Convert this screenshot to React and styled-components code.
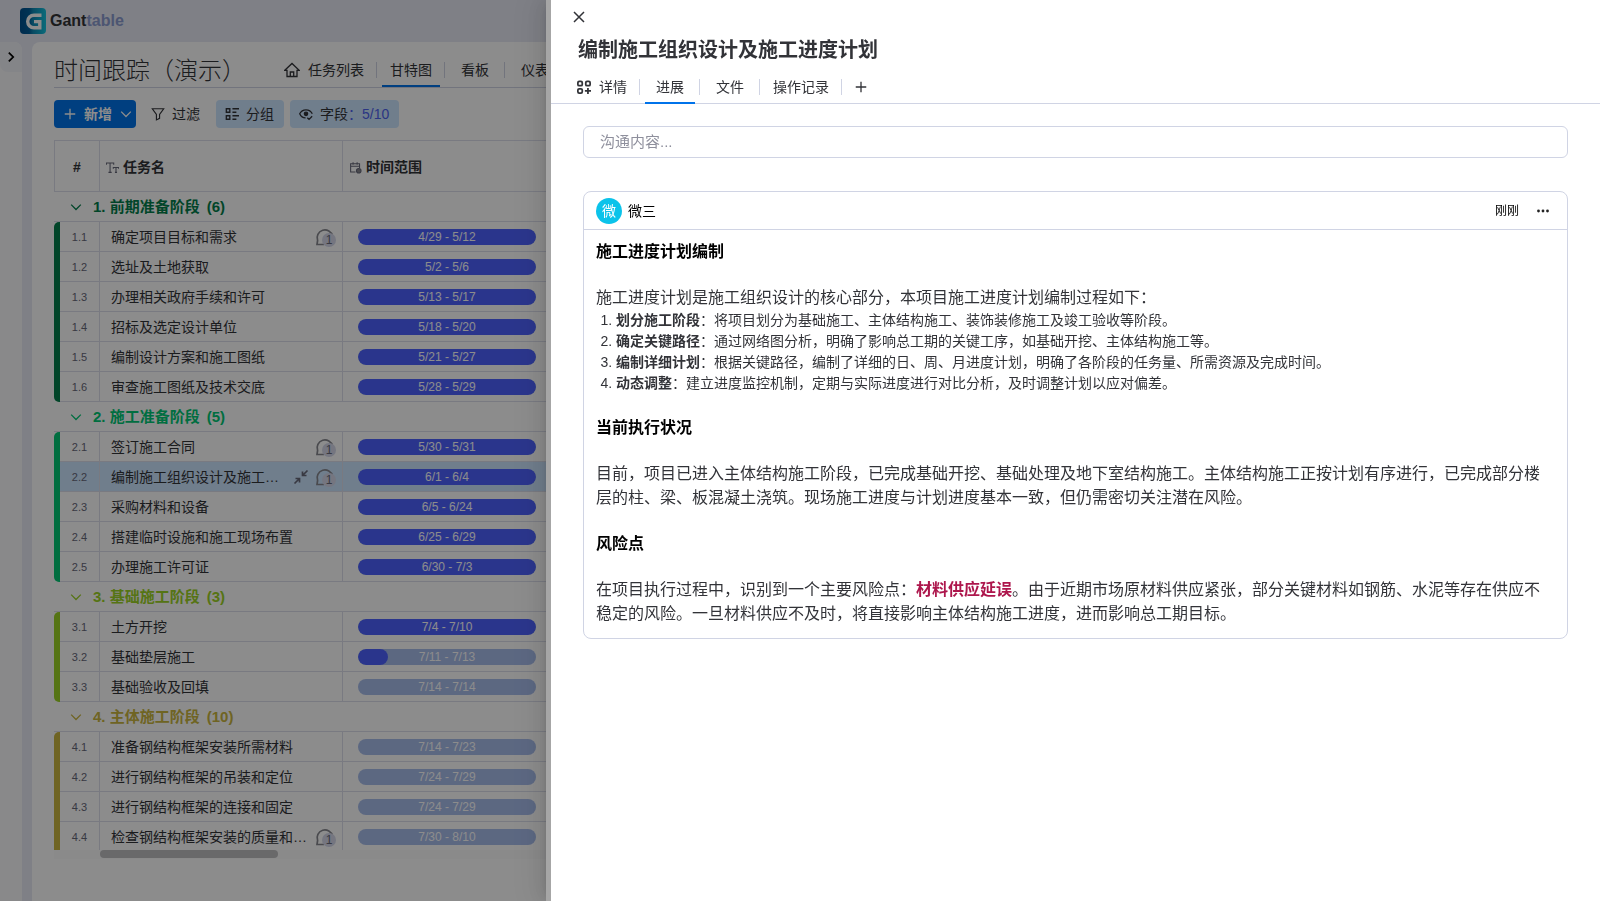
import React from "react";
import styled, { createGlobalStyle } from "styled-components";

const GlobalStyle = createGlobalStyle`
    * {
        box-sizing: border-box;
        margin: 0;
        padding: 0;
    }

    body {
        font-family: "Liberation Sans", "Noto Sans CJK SC", sans-serif;
        font-size: 14px;
        line-height: 20px;
        color: #323338;
        background: #e7e9f4;
        overflow: hidden;
    }

    button, input {
        font: inherit;
        color: inherit;
        background: none;
        border: none;
    }

    button {
        cursor: pointer;
    }

    svg {
        display: block;
        flex: none;
    }
`

/* ---------- page shell ---------- */

const Page = styled.div`
    height: 100vh;
    display: flex;
    flex-direction: column;
`

const TopBar = styled.header`
    height: 42px;
    flex: none;
    display: flex;
    align-items: center;
    gap: 4px;
    padding: 0 20px;
`

const Brand = styled.span`
    font-size: 16px;
    font-weight: bold;

    span {
        color: #8a9bcf;
    }
`

const Body = styled.div`
    flex: 1;
    min-height: 0;
    display: flex;
    gap: 10px;
`

const Sidebar = styled.aside`
    width: 22px;
    flex: none;
    background: #f9f9fb;
    border-radius: 0 8px 0 0;
`

const Expand = styled.button`
    width: 22px;
    height: 30px;
    display: flex;
    align-items: center;
    justify-content: center;
    background: #f1f2f7;
    border-radius: 0 8px 0 8px;
    color: #000;
`

const Main = styled.main`
    flex: 1;
    min-width: 0;
    display: flex;
    flex-direction: column;
    background: #fff;
    border-radius: 8px 0 0 0;
    padding: 0 0 42px 22px;
`

const TitleBar = styled.div`
    height: 46px;
    flex: none;
    display: flex;
    align-items: stretch;
    gap: 25px;
    padding-top: 11px;
    border-bottom: 1px solid #d0d4e4;
`

const Title = styled.h1`
    font-size: 24px;
    line-height: 36px;
    font-weight: 300;
    white-space: nowrap;
`

/* ---------- tabs, shared by page and drawer ---------- */

const Tabs = styled.nav`
    display: flex;
`

const TabItem = styled.div`
    display: flex;
    align-items: center;
    padding-left: 5px;

    &::after {
        content: "";
        width: 1px;
        height: 16px;
        background: #d0d4e4;
    }
`

const Tab = styled.button`
    position: relative;
    height: 100%;
    min-width: 50px;
    margin-right: 4px;
    padding: 0 8px;
    display: flex;
    align-items: center;
    justify-content: center;
    gap: 8px;
    white-space: nowrap;

    &::after {
        content: "";
        position: absolute;
        left: 0;
        right: 0;
        bottom: ${({ $overlap }) => ($overlap ? '-1px' : '0')};
        height: 2px;
        background: ${({ $active }) => ($active ? '#0073ea' : 'transparent')};
    }
`

/* ---------- toolbar ---------- */

const Toolbar = styled.div`
    flex: none;
    display: flex;
    gap: 6px;
    padding: 12px 0;
`

const ToolButton = styled.button`
    height: 28px;
    display: flex;
    align-items: center;
    gap: 7px;
    padding: 0 10px 0 9px;
    border-radius: 4px;
    background: ${({ $on }) => ($on ? '#cce5ff' : 'transparent')};
    white-space: nowrap;

    em {
        font-style: normal;
        color: #4e62ee;
    }
`

const AddButton = styled(ToolButton)`
    background: #0073ea;
    color: #fff;
    font-weight: bold;
    padding-right: 3px;
`

/* ---------- table ---------- */

const TableArea = styled.div`
    flex: 1;
    min-height: 0;
    overflow: hidden;
`

const Table = styled.table`
    width: 100%;
    table-layout: fixed;
    border-collapse: separate;
    border-spacing: 0;
`

const HeadCell = styled.th`
    height: 52px;
    border: solid #dcdfec;
    border-width: ${({ $first }) => ($first ? '1px' : '1px 1px 1px 0')};
    padding-top: 2px;
    padding-left: ${({ $first }) => ($first ? '0' : '6px')};
    text-align: ${({ $first }) => ($first ? 'center' : 'left')};
`

const HeadLabel = styled.span`
    display: flex;
    align-items: center;
    gap: 4px;

    svg {
        color: #676879;
    }
`

const GroupCell = styled.td`
    height: 30px;
    border-bottom: 1px solid #dcdfec;
    color: ${({ $color }) => $color};
`

const GroupButton = styled.button`
    display: flex;
    align-items: center;
    gap: 7px;
    padding-left: 15px;
    font-size: 15px;
    font-weight: bold;
    white-space: nowrap;

    svg {
        margin-right: 3px;
    }
`

const ColorCell = styled.td`
    background: ${({ $color }) => $color};
    border-radius: ${({ $cut }) => ($cut ? '5px 0 0 0' : '5px 0 0 5px')};
`

const Row = styled.tr`
    background: ${({ $selected }) => ($selected ? '#cce5ff' : 'transparent')};
`

const Cell = styled.td`
    height: 30px;
    border: solid #dcdfec;
    border-width: 0 1px 1px 0;
`

const NumberCell = styled(Cell)`
    font-size: 11px;
    text-align: center;
    color: #676879;
`

const NameCell = styled(Cell)`
    padding: 0 6px 0 11px;
`

const NameLine = styled.div`
    display: flex;
    align-items: center;
    gap: 6px;
    color: #676879;
`

const Name = styled.span`
    flex: 1;
    min-width: 0;
    color: #323338;
    white-space: nowrap;
`

const CommentButton = styled.button`
    position: relative;
    width: 21px;
    height: 20px;
    flex: none;
    color: #87888f;
`

const CommentCount = styled.span`
    position: absolute;
    right: 0;
    bottom: 0;
    width: 14px;
    height: 14px;
    border-radius: 7px;
    background: #d5d8ea;
    color: #676879;
    font-size: 12px;
    line-height: 14px;
    text-align: center;
`

const RangeCell = styled(Cell)`
    padding: 7px 15px 0;
    vertical-align: top;
`

const RangeBar = styled.div`
    width: 178px;
    height: 16px;
    border-radius: 8px;
    overflow: hidden;
    display: grid;
    background: #a8bdec;
    color: #fff;
    font-size: 12px;
    line-height: 16px;
    text-align: center;

    > * {
        grid-area: 1 / 1;
    }
`

const RangeDone = styled.div`
    background: #4e62ff;
    border-radius: 8px;
`

const ScrollTrack = styled.div`
    height: 9px;
    flex: none;
    padding-left: 46px;
    background: #fbfbfc;
`

const ScrollThumb = styled.div`
    width: 178px;
    height: 8px;
    border-radius: 4px;
    background: #bfbfc1;
`

/* ---------- drawer ---------- */

const Mask = styled.div`
    position: fixed;
    inset: 0;
    background: rgba(0,0,0,.45);
    display: flex;
    padding-left: 546px;
`

const Drawer = styled.section`
    flex: 1;
    min-width: 0;
    background: #fff;
    border-left: 5px solid #a6a6a6; // drag handle
    box-shadow: -6px 0 16px rgba(0,0,0,.08), -3px 0 6px -4px rgba(0,0,0,.12), -9px 0 28px 8px rgba(0,0,0,.05);
`

const DrawerHead = styled.div`
    border-bottom: 1px solid #d0d4e4;
    padding: 9px 13px 0;
`

const CloseButton = styled.button`
    display: flex;
    padding: 0 7px;
    height: 16px;
    align-items: center;
`

const DrawerTitle = styled.h2`
    font-size: 20px;
    line-height: 28px;
    padding: 11px 14px 6px;
`

const DrawerTabs = styled(Tabs)`
    height: 33px;
`

const AddTab = styled.button`
    padding: 0 12px;
`

const DrawerBody = styled.div`
    padding: 22px 32px;
`

const MessageInput = styled.input`
    display: block;
    width: 100%;
    height: 32px;
    padding: 0 16px 1px;
    border: 1px solid #d0d4e4;
    border-radius: 6px;
    font-size: 15px;

    &::placeholder {
        color: #8e8f9c;
        opacity: 1;
    }
`

const Card = styled.article`
    margin-top: 33px;
    border: 1px solid #d0d4e4;
    border-radius: 8px;
`

const CardHead = styled.div`
    height: 38px;
    display: flex;
    align-items: center;
    gap: 6px;
    padding: 0 12px;
    border-bottom: 1px solid #d0d4e4;
    color: #000;
`

const Avatar = styled.span`
    width: 26px;
    height: 26px;
    border-radius: 13px;
    background: #0bc3ea;
    color: #fff;
    line-height: 26px;
    text-align: center;
`

const Time = styled.time`
    margin-left: auto;
    font-size: 12px;
`

const MoreButton = styled.button`
    padding: 0 4px 0 10px;
`

const Post = styled.div`
    padding: 10px 12px 12px;
    font-size: 16px;
    line-height: 24px;

    h3 {
        font-size: 16px;
        color: #000;
        margin: 22px 0;
    }

    h3:first-child {
        margin-top: 0;
    }

    ol {
        font-size: 14px;
        line-height: 21px;
        padding-left: 20px;
    }

    p strong {
        color: #ad164c;
    }
`

/* ---------- icons ---------- */

const Svg = ({ size = 14, width = 1.3, children }) => (
    <svg width={size} height={size} viewBox="0 0 16 16" fill="none" stroke="currentColor" strokeWidth={width} aria-hidden="true">
        {children}
    </svg>
);

const Logo = () => (
    <svg width="26" height="26" viewBox="0 0 26 26" aria-hidden="true">
        <defs>
            <linearGradient id="logo" x1="0" y1="0" x2="1" y2="0">
                <stop offset="0" stopColor="#00508e" />
                <stop offset=".35" stopColor="#005d9a" />
                <stop offset=".5" stopColor="#1088b4" />
                <stop offset="1" stopColor="#14c4e0" />
            </linearGradient>
        </defs>
        <rect width="26" height="26" rx="4" fill="url(#logo)" />
        <path d="M21.500 7.200H14A6.300 6.300 0 0 0 7.700 13.500 6.300 6.300 0 0 0 14 19.800H19.800V13.600H14" fill="none" stroke="#fff" strokeWidth="3.400" />
    </svg>
);

const ChevronDown = () => <Svg width={1.5}><path d="M2.500 5.300 8 10.800 13.500 5.300" /></Svg>;
const Plus = () => <Svg width={1.5}><path d="M8 2v12M2 8h12" /></Svg>;

const CommentIcon = () => (
    <svg width="19" height="18" viewBox="0 0 19 18" fill="none" stroke="currentColor" strokeWidth="1.7" aria-hidden="true">
        <path d="M17.500 8A7.800 7.800 0 1 0 2.600 12.500L2 16.500H9" />
    </svg>
);

/* ---------- data ---------- */

const groups = [
    {
        title: "1. 前期准备阶段", count: 6, color: "#037f4c",
        tasks: [
            { id: "1.1", name: "确定项目目标和需求", range: "4/29 - 5/12", done: 100, comments: 1 },
            { id: "1.2", name: "选址及土地获取", range: "5/2 - 5/6", done: 100 },
            { id: "1.3", name: "办理相关政府手续和许可", range: "5/13 - 5/17", done: 100 },
            { id: "1.4", name: "招标及选定设计单位", range: "5/18 - 5/20", done: 100 },
            { id: "1.5", name: "编制设计方案和施工图纸", range: "5/21 - 5/27", done: 100 },
            { id: "1.6", name: "审查施工图纸及技术交底", range: "5/28 - 5/29", done: 100 },
        ],
    },
    {
        title: "2. 施工准备阶段", count: 5, color: "#00c875",
        tasks: [
            { id: "2.1", name: "签订施工合同", range: "5/30 - 5/31", done: 100, comments: 1 },
            { id: "2.2", name: "编制施工组织设计及施工…", range: "6/1 - 6/4", done: 100, comments: 1, selected: true },
            { id: "2.3", name: "采购材料和设备", range: "6/5 - 6/24", done: 100 },
            { id: "2.4", name: "搭建临时设施和施工现场布置", range: "6/25 - 6/29", done: 100 },
            { id: "2.5", name: "办理施工许可证", range: "6/30 - 7/3", done: 100 },
        ],
    },
    {
        title: "3. 基础施工阶段", count: 3, color: "#9cd326",
        tasks: [
            { id: "3.1", name: "土方开挖", range: "7/4 - 7/10", done: 100 },
            { id: "3.2", name: "基础垫层施工", range: "7/11 - 7/13", done: 17 },
            { id: "3.3", name: "基础验收及回填", range: "7/14 - 7/14", done: 0 },
        ],
    },
    {
        title: "4. 主体施工阶段", count: 10, color: "#cab641",
        tasks: [
            { id: "4.1", name: "准备钢结构框架安装所需材料", range: "7/14 - 7/23", done: 0 },
            { id: "4.2", name: "进行钢结构框架的吊装和定位", range: "7/24 - 7/29", done: 0 },
            { id: "4.3", name: "进行钢结构框架的连接和固定", range: "7/24 - 7/29", done: 0 },
            { id: "4.4", name: "检查钢结构框架安装的质量和…", range: "7/30 - 8/10", done: 0, comments: 1 },
        ],
    },
];

const TaskRow = ({ task, lead }) => (
    <Row $selected={task.selected}>
        {lead}
        <NumberCell>{task.id}</NumberCell>
        <NameCell>
            <NameLine>
                <Name>{task.name}</Name>
                {task.selected && (
                    <Svg size={16} width={1.7}>
                        <path d="M14.500 1.500 9.500 6.500M9.500 2.500v4h4M1.500 14.500l5-5M2.500 9.500h4v4" />
                    </Svg>
                )}
                {task.comments && (
                    <CommentButton aria-label="评论">
                        <CommentIcon />
                        <CommentCount>{task.comments}</CommentCount>
                    </CommentButton>
                )}
            </NameLine>
        </NameCell>
        <RangeCell>
            <RangeBar>
                <RangeDone style={{ width: `${task.done}%` }} />
                <span>{task.range}</span>
            </RangeBar>
        </RangeCell>
    </Row>
);

const Group = ({ group }) => (
    <tbody>
        <tr>
            <GroupCell colSpan={4} $color={group.color}>
                <GroupButton>
                    <ChevronDown />
                    <span>{group.title}</span>
                    <span>({group.count})</span>
                </GroupButton>
            </GroupCell>
        </tr>
        {group.tasks.map((task, i) => (
            <TaskRow
                key={task.id}
                task={task}
                lead={i === 0 && (
                    <ColorCell
                        rowSpan={group.tasks.length}
                        $color={group.color}
                        $cut={group.tasks.length < group.count}
                    />
                )}
            />
        ))}
    </tbody>
);

const Workspace = () => (
    <Page>
        <TopBar>
            <Logo />
            <Brand>Gant<span>table</span></Brand>
        </TopBar>
        <Body>
            <Sidebar>
                <Expand aria-label="展开">
                    <Svg width={2}><path d="M5.500 3l5 5-5 5" /></Svg>
                </Expand>
            </Sidebar>
            <Main>
                <TitleBar>
                    <Title>时间跟踪（演示）</Title>
                    <Tabs>
                        <TabItem>
                            <Tab>
                                <Svg size={16}>
                                    <path d="M.8 8.300 8 1.500l7.200 6.800H13V14.500H3V8.300zM6.300 14.500V10h3.400v4.500" />
                                </Svg>
                                任务列表
                            </Tab>
                        </TabItem>
                        <TabItem><Tab $active>甘特图</Tab></TabItem>
                        <TabItem><Tab>看板</Tab></TabItem>
                        <TabItem><Tab>仪表</Tab></TabItem>
                    </Tabs>
                </TitleBar>
                <Toolbar>
                    <AddButton><Plus />新增<ChevronDown /></AddButton>
                    <ToolButton>
                        <Svg><path d="M1.500 2h13L9.800 8.500V13L6.200 14.800V8.500z" /></Svg>
                        过滤
                    </ToolButton>
                    <ToolButton $on>
                        <Svg width={1.5}>
                            <path d="M1.500 2h4v4h-4zM1.500 10h4v4h-4zM8.500 2H16M8.500 6H13M8.500 10H16M8.500 14H13" />
                        </Svg>
                        分组
                    </ToolButton>
                    <ToolButton $on>
                        <Svg width={1.5}>
                            <path d="M7.500 12.500C4 12.500 1.800 10 .8 7.800 2 5.300 4.500 3.200 8 3.200s6 2.100 7.200 4.600M9.500 12.200l2 2 3.500-3.700" />
                            <circle cx="8" cy="7.800" r="1.900" fill="currentColor" />
                        </Svg>
                        <span>字段<em>：5/10</em></span>
                    </ToolButton>
                </Toolbar>
                <TableArea>
                    <Table>
                        <colgroup>
                            <col width="6" />
                            <col width="40" />
                            <col width="243" />
                            <col />
                        </colgroup>
                        <thead>
                            <tr>
                                <HeadCell colSpan={2} $first>#</HeadCell>
                                <HeadCell>
                                    <HeadLabel>
                                        <Svg size={13} width={1.3}><path d="M.5 4.500V2.500h9v2M5 2.500V14M3 14h4M9 9.500V8h6.500v1.500M12.300 8v6M11 14h2.600" /></Svg>
                                        任务名
                                    </HeadLabel>
                                </HeadCell>
                                <HeadCell>
                                    <HeadLabel>
                                        <Svg size={13} width={1.3}>
                                            <path d="M8 13.500H2V3.500h11v5M2 6.500h11M5 1.500v3M10 1.500v3" />
                                            <circle cx="12" cy="12" r="2.800" fill="#87888f" />
                                        </Svg>
                                        时间范围
                                    </HeadLabel>
                                </HeadCell>
                            </tr>
                        </thead>
                        {groups.map((group) => <Group key={group.title} group={group} />)}
                    </Table>
                </TableArea>
                <ScrollTrack><ScrollThumb /></ScrollTrack>
            </Main>
        </Body>
    </Page>
);

const TaskDrawer = () => (
    <Mask>
        <Drawer>
            <DrawerHead>
                <CloseButton aria-label="关闭">
                    <Svg size={16} width={1.5}><path d="M3 3l10 10M13 3 3 13" /></Svg>
                </CloseButton>
                <DrawerTitle>编制施工组织设计及施工进度计划</DrawerTitle>
                <DrawerTabs>
                    <TabItem>
                        <Tab>
                            <Svg width={2}>
                                <rect x="1" y="1.500" width="5" height="5" rx="1.500" />
                                <rect x="10" y="1.500" width="5" height="5" rx="1.500" />
                                <rect x="1" y="10" width="5" height="5" rx="1.500" />
                                <path d="M12.500 9v7M9 12.500h7" />
                            </Svg>
                            详情
                        </Tab>
                    </TabItem>
                    <TabItem><Tab $active $overlap>进展</Tab></TabItem>
                    <TabItem><Tab>文件</Tab></TabItem>
                    <TabItem><Tab>操作记录</Tab></TabItem>
                    <AddTab aria-label="添加"><Plus /></AddTab>
                </DrawerTabs>
            </DrawerHead>
            <DrawerBody>
                <MessageInput aria-label="沟通内容" placeholder="沟通内容..." />
                <Card>
                    <CardHead>
                        <Avatar>微</Avatar>
                        微三
                        <Time>刚刚</Time>
                        <MoreButton aria-label="更多">
                            <svg width="16" height="16" viewBox="0 0 16 16" fill="#222" aria-hidden="true">
                                <circle cx="3.500" cy="8" r="1.400" />
                                <circle cx="8" cy="8" r="1.400" />
                                <circle cx="12.500" cy="8" r="1.400" />
                            </svg>
                        </MoreButton>
                    </CardHead>
                    <Post>
                        <h3>施工进度计划编制</h3>
                        <p>施工进度计划是施工组织设计的核心部分，本项目施工进度计划编制过程如下：</p>
                        <ol>
                            <li><strong>划分施工阶段</strong>：将项目划分为基础施工、主体结构施工、装饰装修施工及竣工验收等阶段。</li>
                            <li><strong>确定关键路径</strong>：通过网络图分析，明确了影响总工期的关键工序，如基础开挖、主体结构施工等。</li>
                            <li><strong>编制详细计划</strong>：根据关键路径，编制了详细的日、周、月进度计划，明确了各阶段的任务量、所需资源及完成时间。</li>
                            <li><strong>动态调整</strong>：建立进度监控机制，定期与实际进度进行对比分析，及时调整计划以应对偏差。</li>
                        </ol>
                        <h3>当前执行状况</h3>
                        <p>目前，项目已进入主体结构施工阶段，已完成基础开挖、基础处理及地下室结构施工。主体结构施工正按计划有序进行，已完成部分楼层的柱、梁、板混凝土浇筑。现场施工进度与计划进度基本一致，但仍需密切关注潜在风险。</p>
                        <h3>风险点</h3>
                        <p>在项目执行过程中，识别到一个主要风险点：<strong>材料供应延误</strong>。由于近期市场原材料供应紧张，部分关键材料如钢筋、水泥等存在供应不稳定的风险。一旦材料供应不及时，将直接影响主体结构施工进度，进而影响总工期目标。</p>
                    </Post>
                </Card>
            </DrawerBody>
        </Drawer>
    </Mask>
);

export default function App() {
    return (
        <>
            <GlobalStyle />
            <Workspace />
            <TaskDrawer />
        </>
    );
}
